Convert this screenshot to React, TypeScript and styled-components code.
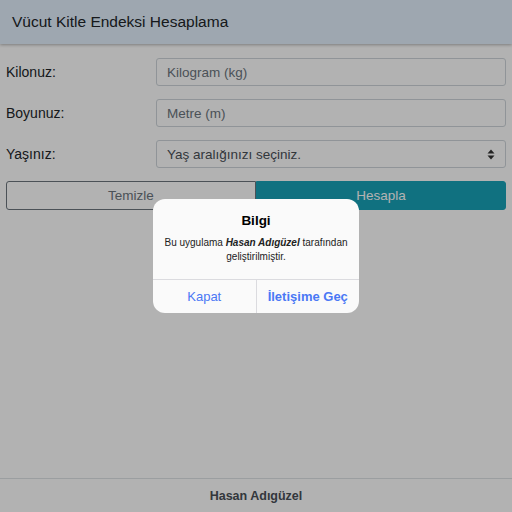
import React from "react";
import styled, { createGlobalStyle } from "styled-components";

const Global = createGlobalStyle`
  html, body { margin: 0; padding: 0; height: 100%; }
  body { font-family: "Liberation Sans", Arial, sans-serif; background: #fff; }
  #root { height: 100%; }
  * { box-sizing: border-box; }
`;

const Page = styled.div`
  position: relative;
  width: 512px;
  height: 512px;
  display: flex;
  flex-direction: column;
  background: #fff;
  overflow: hidden;
`;

const Header = styled.header`
  height: 44px;
  background: #e2f0fd;
  display: flex;
  align-items: center;
  padding-left: 12px;
  box-shadow: 0 1px 3px rgba(0, 0, 0, 0.3);
  font-size: 15.5px;
  color: #212529;
  flex-shrink: 0;
`;

const Content = styled.main`
  flex: 1;
  padding: 14px 6px 0 6px;
  display: flex;
  flex-direction: column;
  gap: 13px;
`;

const Row = styled.div`
  display: flex;
  align-items: center;
  height: 28px;
`;

const Label = styled.label`
  width: 150px;
  font-size: 14px;
  color: #212529;
`;

const Field = styled.div<{ $muted?: boolean }>`
  flex: 1;
  height: 28px;
  border: 1px solid #ced4da;
  border-radius: 3px;
  display: flex;
  align-items: center;
  padding: 0 10px;
  font-size: 13.5px;
  color: ${(p) => (p.$muted ? "#6c757d" : "#495057")};
  justify-content: space-between;
`;

const Buttons = styled.div`
  display: flex;
  height: 29px;
`;

const Btn = styled.button<{ $primary?: boolean }>`
  flex: 1;
  height: 29px;
  font-family: inherit;
  font-size: 13.5px;
  border: 1px solid ${(p) => (p.$primary ? "#17a2b8" : "#6c757d")};
  background: ${(p) => (p.$primary ? "#17a2b8" : "#fff")};
  color: ${(p) => (p.$primary ? "#fff" : "#6c757d")};
  border-radius: ${(p) => (p.$primary ? "0 3px 3px 0" : "3px 0 0 3px")};
  padding: 0;
`;

const Footer = styled.footer`
  height: 34px;
  border-top: 1px solid #dee2e6;
  display: flex;
  align-items: center;
  justify-content: center;
  font-weight: bold;
  font-size: 12.5px;
  color: #495057;
  flex-shrink: 0;
`;

const Backdrop = styled.div`
  position: absolute;
  inset: 0;
  background: rgba(0, 0, 0, 0.3);
`;

const Alert = styled.div`
  position: absolute;
  left: 153px;
  top: 199px;
  width: 206px;
  background: #fafafa;
  border-radius: 12px;
  overflow: hidden;
  display: flex;
  flex-direction: column;
`;

const AlertBody = styled.div`
  padding: 14px 8px 15px;
  text-align: center;
`;

const AlertTitle = styled.div`
  font-weight: bold;
  font-size: 13.5px;
  color: #000;
  margin-bottom: 8px;
`;

const AlertMsg = styled.div`
  font-size: 10px;
  line-height: 14px;
  color: #222;
`;

const Em = styled.b`
  font-style: italic;
`;

const AlertActions = styled.div`
  display: flex;
  border-top: 1px solid #dbdbdf;
  height: 34px;
`;

const AlertBtn = styled.button<{ $bold?: boolean }>`
  flex: 1;
  border: none;
  background: transparent;
  font-family: inherit;
  font-size: 13px;
  color: #4a78f5;
  font-weight: ${(p) => (p.$bold ? "bold" : "normal")};
  & + & { border-left: 1px solid #dbdbdf; }
`;

const Arrows = () => (
  <svg width="8" height="11" viewBox="0 0 8 11">
    <path d="M4 0.5 L7.5 4.5 H0.5 Z M4 10.5 L7.5 6.5 H0.5 Z" fill="#333" />
  </svg>
);

export default function App() {
  return (
    <>
      <Global />
      <Page>
        <Header>Vücut Kitle Endeksi Hesaplama</Header>
        <Content>
          <Row>
            <Label>Kilonuz:</Label>
            <Field $muted>Kilogram (kg)</Field>
          </Row>
          <Row>
            <Label>Boyunuz:</Label>
            <Field $muted>Metre (m)</Field>
          </Row>
          <Row>
            <Label>Yaşınız:</Label>
            <Field>
              <span>Yaş aralığınızı seçiniz.</span>
              <Arrows />
            </Field>
          </Row>
          <Buttons>
            <Btn>Temizle</Btn>
            <Btn $primary>Hesapla</Btn>
          </Buttons>
        </Content>
        <Footer>Hasan Adıgüzel</Footer>
        <Backdrop />
        <Alert>
          <AlertBody>
            <AlertTitle>Bilgi</AlertTitle>
            <AlertMsg>
              Bu uygulama <Em>Hasan Adıgüzel</Em> tarafından geliştirilmiştir.
            </AlertMsg>
          </AlertBody>
          <AlertActions>
            <AlertBtn>Kapat</AlertBtn>
            <AlertBtn $bold>İletişime Geç</AlertBtn>
          </AlertActions>
        </Alert>
      </Page>
    </>
  );
}
